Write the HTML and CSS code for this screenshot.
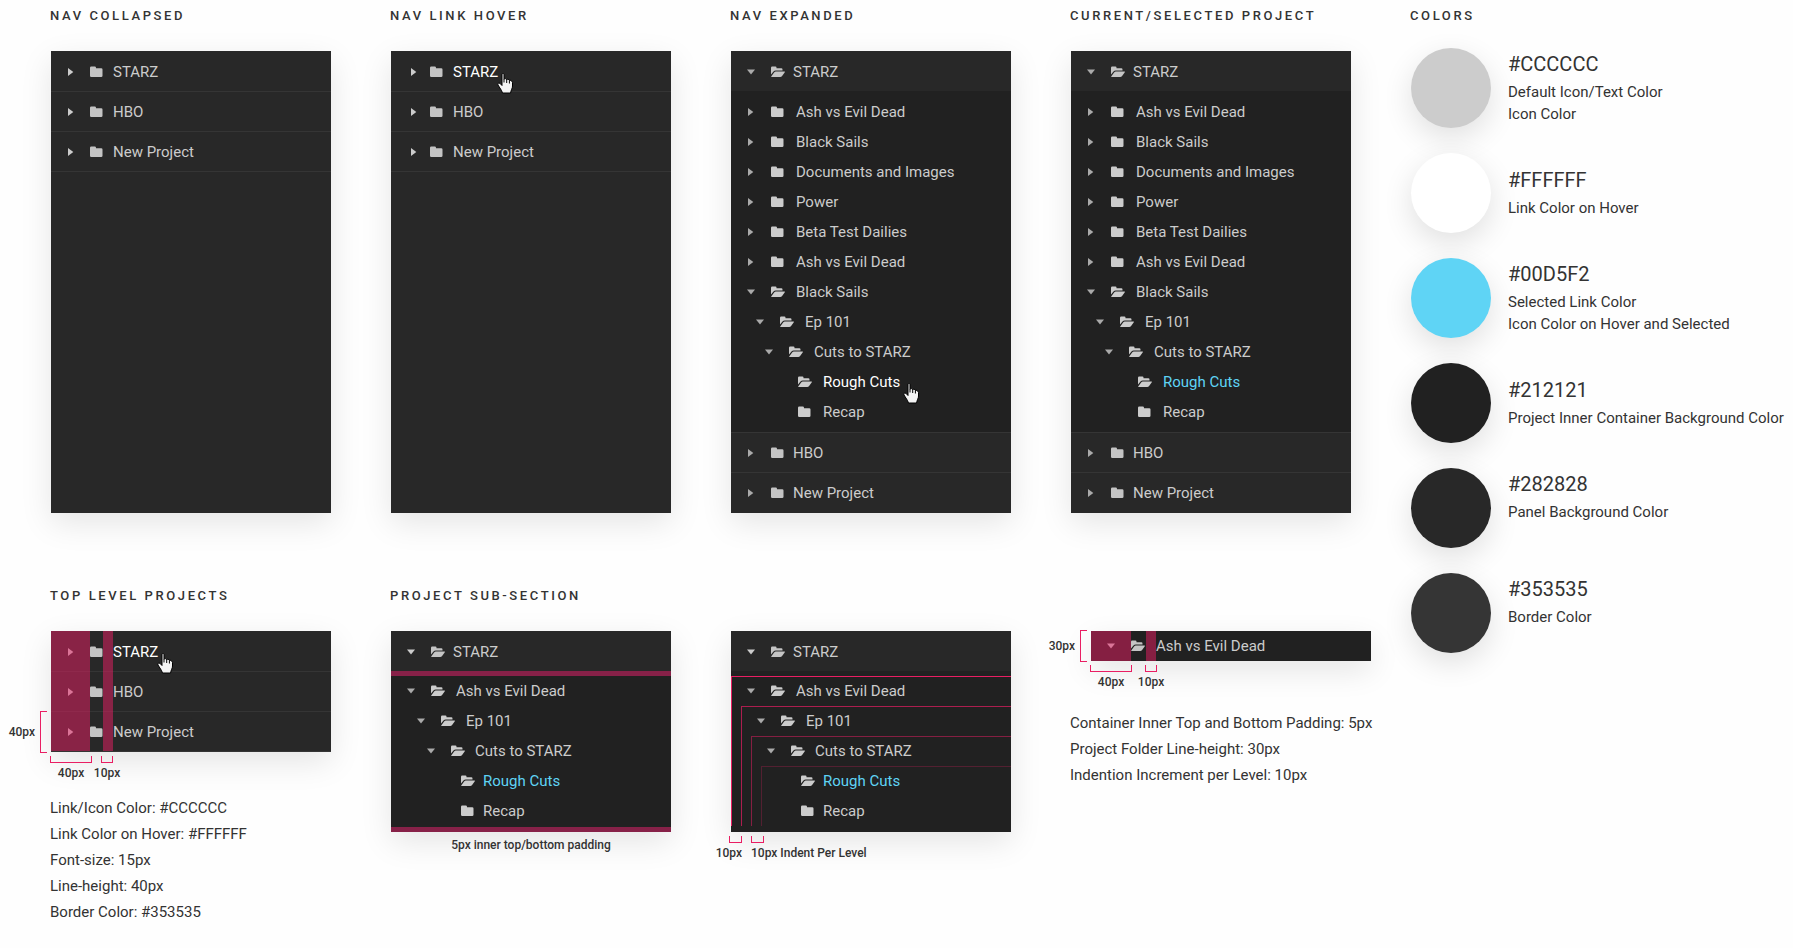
FILE: index.html
```html
<!DOCTYPE html>
<html lang="en">

<head>
  <meta charset="UTF-8">
  <meta name="viewport" content="width=device-width, initial-scale=1.0">
  <title>Project Navigation Styles</title>
  <link rel="stylesheet" href="styles.css">
</head>

<body>
  <!-- shared icons -->
  <svg class="sprite" aria-hidden="true">
    <symbol id="right" viewBox="0 0 8 8"><path d="M1 0v8l5.300-4z" /></symbol>
    <symbol id="down" viewBox="0 0 8 8"><path d="M0 1.500h8L4 6.500z" /></symbol>
    <symbol id="folder" viewBox="0 0 14 12">
      <path d="M1.300.5h3.400Q6 .5 6 1.800V2.200h5.200Q12.500 2.200 12.500 3.500v6.200Q12.500 11 11.200 11H1.300Q0 11 0 9.700V1.800Q0 .5 1.300.5z" />
    </symbol>
    <symbol id="open" viewBox="0 0 14 12">
      <path d="M1.200.5h3.200Q5.500.5 5.500 1.600V2.300h4.800Q11.500 2.300 11.500 3.500V4.600H4.800Q3.400 4.600 2.500 5.600L0 8.600V1.700Q0 .5 1.200.5z" />
      <path d="M4.900 5.500h8.500q.9 0 .4.800L11.100 10.100Q10.400 11 9.200 11H.8Q-.2 11 .4 10.200L3.100 6.500Q3.900 5.500 4.900 5.500z" />
    </symbol>
    <symbol id="hand" viewBox="0 0 17 21">
      <path d="M5 1.500Q5 .5 6 .5t1 1v5Q7.200 5.500 8.300 5.600T9.700 6.800Q10 6 11 6.200T12.400 7.500Q13 7 14 7.500T15.500 9.500V13Q15.500 15 14.500 16.500L13.500 20H5.500L4.500 17.500 1 12Q.3 10.500 1.300 10.200T3.500 10.800L5 12.500z" fill="#f4f4f4" stroke="#000" />
      <path d="M7 6.500V9.500M9.700 7v3M12.400 7.500V10.500" fill="none" stroke="#000" />
    </symbol>
  </svg>

  <main class="board">
    <div class="specs">
      <section>
        <h2>Nav Collapsed</h2>
        <nav class="panel panel-tall">
          <ul class="closed">
            <li><div class="row"><button aria-label="Expand STARZ"><svg><use href="#right" /></svg></button><svg class="icon"><use href="#folder" /></svg><a href="#">STARZ</a></div></li>
            <li><div class="row"><button aria-label="Expand HBO"><svg><use href="#right" /></svg></button><svg class="icon"><use href="#folder" /></svg><a href="#">HBO</a></div></li>
            <li><div class="row"><button aria-label="Expand New Project"><svg><use href="#right" /></svg></button><svg class="icon"><use href="#folder" /></svg><a href="#">New Project</a></div></li>
          </ul>
        </nav>
      </section>

      <section>
        <h2>Nav Link Hover</h2>
        <nav class="panel panel-tall">
          <ul class="closed toggle-near">
            <li><div class="row"><button aria-label="Expand STARZ"><svg><use href="#right" /></svg></button><svg class="icon"><use href="#folder" /></svg><a class="hover" href="#">STARZ<svg class="cursor"><use href="#hand" /></svg></a></div></li>
            <li><div class="row"><button aria-label="Expand HBO"><svg><use href="#right" /></svg></button><svg class="icon"><use href="#folder" /></svg><a href="#">HBO</a></div></li>
            <li><div class="row"><button aria-label="Expand New Project"><svg><use href="#right" /></svg></button><svg class="icon"><use href="#folder" /></svg><a href="#">New Project</a></div></li>
          </ul>
        </nav>
      </section>

      <section>
        <h2>Nav Expanded</h2>
        <nav class="panel panel-tall">
          <ul class="dim-toggles">
            <li>
              <div class="row"><button aria-label="Collapse STARZ"><svg><use href="#down" /></svg></button><svg class="icon"><use href="#open" /></svg><a href="#">STARZ</a></div>
              <div class="inner">
                <ul>
                  <li><div class="row"><button aria-label="Expand"><svg><use href="#right" /></svg></button><svg class="icon"><use href="#folder" /></svg><a href="#">Ash vs Evil Dead</a></div></li>
                  <li><div class="row"><button aria-label="Expand"><svg><use href="#right" /></svg></button><svg class="icon"><use href="#folder" /></svg><a href="#">Black Sails</a></div></li>
                  <li><div class="row"><button aria-label="Expand"><svg><use href="#right" /></svg></button><svg class="icon"><use href="#folder" /></svg><a href="#">Documents and Images</a></div></li>
                  <li><div class="row"><button aria-label="Expand"><svg><use href="#right" /></svg></button><svg class="icon"><use href="#folder" /></svg><a href="#">Power</a></div></li>
                  <li><div class="row"><button aria-label="Expand"><svg><use href="#right" /></svg></button><svg class="icon"><use href="#folder" /></svg><a href="#">Beta Test Dailies</a></div></li>
                  <li><div class="row"><button aria-label="Expand"><svg><use href="#right" /></svg></button><svg class="icon"><use href="#folder" /></svg><a href="#">Ash vs Evil Dead</a></div></li>
                  <li>
                    <div class="row"><button aria-label="Collapse"><svg><use href="#down" /></svg></button><svg class="icon"><use href="#open" /></svg><a href="#">Black Sails</a></div>
                    <ul class="level-2">
                      <li>
                        <div class="row"><button aria-label="Collapse"><svg><use href="#down" /></svg></button><svg class="icon"><use href="#open" /></svg><a href="#">Ep 101</a></div>
                        <ul class="level-3">
                          <li>
                            <div class="row"><button aria-label="Collapse"><svg><use href="#down" /></svg></button><svg class="icon"><use href="#open" /></svg><a href="#">Cuts to STARZ</a></div>
                            <ul class="level-4">
                              <li><div class="row leaf"><svg class="icon"><use href="#open" /></svg><a class="hover" href="#">Rough Cuts<svg class="cursor cursor-away"><use href="#hand" /></svg></a></div></li>
                              <li><div class="row leaf"><svg class="icon"><use href="#folder" /></svg><a href="#">Recap</a></div></li>
                            </ul>
                          </li>
                        </ul>
                      </li>
                    </ul>
                  </li>
                </ul>
              </div>
            </li>
            <li><div class="row"><button aria-label="Expand HBO"><svg><use href="#right" /></svg></button><svg class="icon"><use href="#folder" /></svg><a href="#">HBO</a></div></li>
            <li><div class="row"><button aria-label="Expand New Project"><svg><use href="#right" /></svg></button><svg class="icon"><use href="#folder" /></svg><a href="#">New Project</a></div></li>
          </ul>
        </nav>
      </section>

      <section>
        <h2>Current/Selected Project</h2>
        <nav class="panel panel-tall">
          <ul class="dim-toggles">
            <li>
              <div class="row"><button aria-label="Collapse STARZ"><svg><use href="#down" /></svg></button><svg class="icon"><use href="#open" /></svg><a href="#">STARZ</a></div>
              <div class="inner">
                <ul>
                  <li><div class="row"><button aria-label="Expand"><svg><use href="#right" /></svg></button><svg class="icon"><use href="#folder" /></svg><a href="#">Ash vs Evil Dead</a></div></li>
                  <li><div class="row"><button aria-label="Expand"><svg><use href="#right" /></svg></button><svg class="icon"><use href="#folder" /></svg><a href="#">Black Sails</a></div></li>
                  <li><div class="row"><button aria-label="Expand"><svg><use href="#right" /></svg></button><svg class="icon"><use href="#folder" /></svg><a href="#">Documents and Images</a></div></li>
                  <li><div class="row"><button aria-label="Expand"><svg><use href="#right" /></svg></button><svg class="icon"><use href="#folder" /></svg><a href="#">Power</a></div></li>
                  <li><div class="row"><button aria-label="Expand"><svg><use href="#right" /></svg></button><svg class="icon"><use href="#folder" /></svg><a href="#">Beta Test Dailies</a></div></li>
                  <li><div class="row"><button aria-label="Expand"><svg><use href="#right" /></svg></button><svg class="icon"><use href="#folder" /></svg><a href="#">Ash vs Evil Dead</a></div></li>
                  <li>
                    <div class="row"><button aria-label="Collapse"><svg><use href="#down" /></svg></button><svg class="icon"><use href="#open" /></svg><a href="#">Black Sails</a></div>
                    <ul class="level-2">
                      <li>
                        <div class="row"><button aria-label="Collapse"><svg><use href="#down" /></svg></button><svg class="icon"><use href="#open" /></svg><a href="#">Ep 101</a></div>
                        <ul class="level-3">
                          <li>
                            <div class="row"><button aria-label="Collapse"><svg><use href="#down" /></svg></button><svg class="icon"><use href="#open" /></svg><a href="#">Cuts to STARZ</a></div>
                            <ul class="level-4">
                              <li><div class="row leaf"><svg class="icon"><use href="#open" /></svg><a class="selected" href="#">Rough Cuts</a></div></li>
                              <li><div class="row leaf"><svg class="icon"><use href="#folder" /></svg><a href="#">Recap</a></div></li>
                            </ul>
                          </li>
                        </ul>
                      </li>
                    </ul>
                  </li>
                </ul>
              </div>
            </li>
            <li><div class="row"><button aria-label="Expand HBO"><svg><use href="#right" /></svg></button><svg class="icon"><use href="#folder" /></svg><a href="#">HBO</a></div></li>
            <li><div class="row"><button aria-label="Expand New Project"><svg><use href="#right" /></svg></button><svg class="icon"><use href="#folder" /></svg><a href="#">New Project</a></div></li>
          </ul>
        </nav>
      </section>

      <section>
        <h2>Top Level Projects</h2>
        <nav class="panel">
          <ul class="closed">
            <li><div class="row"><button aria-label="Expand STARZ"><svg><use href="#right" /></svg></button><svg class="icon"><use href="#folder" /></svg><a class="hover" href="#">STARZ<svg class="cursor"><use href="#hand" /></svg></a></div></li>
            <li><div class="row"><button aria-label="Expand HBO"><svg><use href="#right" /></svg></button><svg class="icon"><use href="#folder" /></svg><a href="#">HBO</a></div></li>
            <li><div class="row"><button aria-label="Expand New Project"><svg><use href="#right" /></svg></button><svg class="icon"><use href="#folder" /></svg><a href="#">New Project</a></div></li>
          </ul>
          <div class="strips"><span class="strip-indent"></span><span class="strip-gap"></span></div>
          <div class="side-ruler"><span>40px</span></div>
        </nav>
        <div class="rulers">
          <span class="ruler">40px</span>
          <span class="ruler ruler-small">10px</span>
        </div>
        <ul class="notes">
          <li>Link/Icon Color: #CCCCCC</li>
          <li>Link Color on Hover: #FFFFFF</li>
          <li>Font-size: 15px</li>
          <li>Line-height: 40px</li>
          <li>Border Color: #353535</li>
        </ul>
      </section>

      <section>
        <h2>Project Sub-Section</h2>
        <nav class="panel">
          <ul class="wide-indent">
            <li>
              <div class="row"><button aria-label="Collapse STARZ"><svg><use href="#down" /></svg></button><svg class="icon"><use href="#open" /></svg><a href="#">STARZ</a></div>
              <div class="inner inner-padded">
                <ul>
                  <li>
                    <div class="row"><button aria-label="Collapse"><svg><use href="#down" /></svg></button><svg class="icon"><use href="#open" /></svg><a href="#">Ash vs Evil Dead</a></div>
                    <ul class="level-2">
                      <li>
                        <div class="row"><button aria-label="Collapse"><svg><use href="#down" /></svg></button><svg class="icon"><use href="#open" /></svg><a href="#">Ep 101</a></div>
                        <ul class="level-3">
                          <li>
                            <div class="row"><button aria-label="Collapse"><svg><use href="#down" /></svg></button><svg class="icon"><use href="#open" /></svg><a href="#">Cuts to STARZ</a></div>
                            <ul class="level-4">
                              <li><div class="row leaf"><svg class="icon"><use href="#open" /></svg><a class="selected" href="#">Rough Cuts</a></div></li>
                              <li><div class="row leaf"><svg class="icon"><use href="#folder" /></svg><a href="#">Recap</a></div></li>
                            </ul>
                          </li>
                        </ul>
                      </li>
                    </ul>
                  </li>
                </ul>
              </div>
            </li>
          </ul>
        </nav>
        <p class="caption">5px inner top/bottom padding</p>
      </section>

      <section class="untitled">
        <nav class="panel">
          <ul class="wide-indent">
            <li>
              <div class="row"><button aria-label="Collapse STARZ"><svg><use href="#down" /></svg></button><svg class="icon"><use href="#open" /></svg><a href="#">STARZ</a></div>
              <div class="inner guides">
                <ul>
                  <li>
                    <div class="row"><button aria-label="Collapse"><svg><use href="#down" /></svg></button><svg class="icon"><use href="#open" /></svg><a href="#">Ash vs Evil Dead</a></div>
                    <ul class="level-2">
                      <li>
                        <div class="row"><button aria-label="Collapse"><svg><use href="#down" /></svg></button><svg class="icon"><use href="#open" /></svg><a href="#">Ep 101</a></div>
                        <ul class="level-3">
                          <li>
                            <div class="row"><button aria-label="Collapse"><svg><use href="#down" /></svg></button><svg class="icon"><use href="#open" /></svg><a href="#">Cuts to STARZ</a></div>
                            <ul class="level-4">
                              <li><div class="row leaf"><svg class="icon"><use href="#open" /></svg><a class="selected" href="#">Rough Cuts</a></div></li>
                              <li><div class="row leaf"><svg class="icon"><use href="#folder" /></svg><a href="#">Recap</a></div></li>
                            </ul>
                          </li>
                        </ul>
                      </li>
                    </ul>
                  </li>
                </ul>
              </div>
            </li>
          </ul>
        </nav>
        <div class="rulers rulers-level">
          <span class="ruler ruler-small ruler-end">10px</span>
          <span class="ruler ruler-small ruler-start">10px Indent Per Level</span>
        </div>
      </section>

      <section class="untitled">
        <div class="single">
          <nav class="panel">
            <div class="inner-row">
              <div class="row"><button aria-label="Collapse"><svg><use href="#down" /></svg></button><svg class="icon"><use href="#open" /></svg><a href="#">Ash vs Evil Dead</a></div>
            </div>
            <div class="strips strips-inner"><span class="strip-indent"></span><span class="strip-gap"></span></div>
            <div class="side-ruler side-ruler-inner"><span>30px</span></div>
          </nav>
          <div class="rulers rulers-inner">
            <span class="ruler">40px</span>
            <span class="ruler ruler-small">10px</span>
          </div>
        </div>
        <ul class="notes notes-inner">
          <li>Container Inner Top and Bottom Padding: 5px</li>
          <li>Project Folder Line-height: 30px</li>
          <li>Indention Increment per Level: 10px</li>
        </ul>
      </section>
    </div>

    <section class="colors">
      <h2>Colors</h2>
      <ul class="swatches">
        <li>
          <span class="swatch default"></span>
          <div>
            <h3>#CCCCCC</h3>
            <p>Default Icon/Text Color</p>
            <p>Icon Color</p>
          </div>
        </li>
        <li class="middle">
          <span class="swatch white"></span>
          <div>
            <h3>#FFFFFF</h3>
            <p>Link Color on Hover</p>
          </div>
        </li>
        <li>
          <span class="swatch blue"></span>
          <div>
            <h3>#00D5F2</h3>
            <p>Selected Link Color</p>
            <p>Icon Color on Hover and Selected</p>
          </div>
        </li>
        <li class="middle">
          <span class="swatch inner-bg"></span>
          <div>
            <h3>#212121</h3>
            <p>Project Inner Container Background Color</p>
          </div>
        </li>
        <li>
          <span class="swatch panel-bg"></span>
          <div>
            <h3>#282828</h3>
            <p>Panel Background Color</p>
          </div>
        </li>
        <li>
          <span class="swatch border-color"></span>
          <div>
            <h3>#353535</h3>
            <p>Border Color</p>
          </div>
        </li>
      </ul>
    </section>
  </main>
</body>

</html>
```
FILE: styles.css
```css
* {
  box-sizing: border-box;
}

body {
  background: #fefefe;
  color: #333;
  font-family: Roboto, "Liberation Sans", sans-serif;
  font-size: 15px;
  margin: 0;
}

ul {
  list-style: none;
  margin: 0;
  padding: 0;
}

h2 {
  font-size: 13px;
  font-weight: 500;
  letter-spacing: .2em;
  line-height: 20px;
  margin: 0 0 25px -1px;
  text-transform: uppercase;
  white-space: nowrap;
}

.sprite {
  display: none;
}

.board {
  display: flex;
  gap: 60px;
  padding: 6px 0 0 51px;
}

.specs {
  column-gap: 60px;
  display: grid;
  flex: 1;
  grid-template-columns: repeat(4, minmax(0, 1fr));
  row-gap: 73px;
}

.untitled {
  padding-top: 45px;
}

/* navigation panels */
.panel {
  background: #282828;
  box-shadow: 0 10px 30px rgba(0, 0, 0, .1);
  position: relative;
}

.panel-tall {
  min-height: 462px;
}

.panel > ul > li + li {
  border-top: 1px solid #353535;
}

.closed {
  border-bottom: 1px solid #353535;
}

.row {
  align-items: center;
  display: flex;
  height: 40px;
  padding: 1px 0 0 16px;
}

li + li > .row {
  height: 39px;
  padding-top: 0;
}

.row button {
  background: none;
  border: 0;
  color: #ccc;
  cursor: pointer;
  height: 8px;
  margin: 0 16px 0 0;
  padding: 0;
  width: 8px;
}

.row button svg {
  display: block;
  fill: currentColor;
  height: 8px;
  width: 8px;
}

.closed button {
  margin-right: 15px;
}

.toggle-near .row {
  padding-left: 19px;
}

.toggle-near button {
  margin-right: 12px;
}

.dim-toggles button,
.inner button {
  color: #aaa;
}

.icon {
  fill: #c4c4c4;
  flex: none;
  height: 12px;
  margin-right: 8px;
  width: 14px;
}

.closed .icon {
  margin-right: 9px;
}

.row a {
  color: #ccc;
  position: relative;
  text-decoration: none;
  white-space: nowrap;
}

.row a:hover,
.row a.hover {
  color: #fff;
}

.row a.selected {
  color: #5fd4f5;
}

.cursor {
  height: 21px;
  left: calc(100% - 1px);
  position: absolute;
  top: 10px;
  width: 17px;
}

.cursor-away {
  margin-left: 4px;
}

.inner {
  background: #212121;
  padding: 6px 0 5px;
}

.inner .row,
.inner-row .row {
  height: 30px;
  padding-top: 0;
}

.inner .icon,
.inner-row .icon {
  margin-right: 11px;
}

.inner .icon {
  fill: #ccc;
}

.inner ul ul {
  margin-left: 9px;
}

.inner .leaf {
  padding-left: 40px;
}

/* 10px steps, the names stay a little closer to the icons */
.wide-indent .inner ul ul {
  margin-left: 10px;
}

.wide-indent .inner .level-3 .icon {
  margin-right: 10px;
}

.wide-indent .inner .level-4 .icon {
  margin-right: 8px;
}

.inner-padded {
  border-bottom: 5px solid #872148;
  border-top: 5px solid #872148;
  padding: 0 0 1px;
}

.inner-row {
  background: #212121;
}

/* indent guides */
.guides {
  padding: 5px 0 6px;
}

.guides ul {
  position: relative;
}

.guides ul::before {
  border-left: 1px solid #e91e63;
  border-top: 1px solid #e91e63;
  content: "";
  inset: 0;
  pointer-events: none;
  position: absolute;
}

.guides .level-2::before {
  opacity: .7;
}

.guides .level-3::before {
  opacity: .5;
}

.guides .level-4::before {
  opacity: .25;
}

/* measurements */
.strips {
  bottom: 1px;
  display: flex;
  gap: 13px;
  left: 0;
  pointer-events: none;
  position: absolute;
  top: 0;
}

.strips span {
  background: rgba(233, 30, 99, .5);
}

.strip-indent {
  width: 39px;
}

.strip-gap {
  width: 10px;
}

.strips-inner {
  bottom: 0;
  gap: 15px;
}

.strips-inner .strip-indent {
  width: 40px;
}

.side-ruler {
  align-items: center;
  bottom: 0;
  display: flex;
  font-size: 12px;
  font-weight: 500;
  gap: 5px;
  height: 40px;
  position: absolute;
  right: calc(100% + 4px);
}

.side-ruler::after {
  border: 1px solid #e91e63;
  border-right: 0;
  content: "";
  height: 100%;
  width: 6px;
}

.side-ruler-inner {
  height: 30px;
}

.rulers {
  display: flex;
  font-size: 12px;
  font-weight: 500;
  gap: 11px;
  line-height: 16px;
  padding-top: 4px;
  position: relative;
}

.ruler {
  align-items: center;
  display: flex;
  flex-direction: column;
  gap: 2px;
  white-space: nowrap;
  width: 40px;
}

.ruler::before {
  border: 1px solid #e91e63;
  border-top: 0;
  content: "";
  height: 6px;
  width: 100%;
}

.ruler-small {
  width: 10px;
}

.rulers-inner {
  gap: 15px;
}

.rulers-level {
  gap: 9px;
}

.rulers-level .ruler {
  width: 11px;
}

.ruler-start {
  align-items: flex-start;
}

.ruler-end {
  align-items: flex-end;
}

.single {
  margin: 0 -20px 0 20px;
}

.caption {
  font-size: 12px;
  font-weight: 500;
  line-height: 16px;
  margin: 5px 0 0;
  position: relative;
  text-align: center;
}

.notes {
  line-height: 26px;
  margin: 14px 0 0 -1px;
  position: relative;
  white-space: nowrap;
}

.notes-inner {
  margin-top: 20px;
}

/* colors */
.colors {
  width: 382px;
}

.colors h2 {
  margin-bottom: 22px;
}

.swatches {
  display: flex;
  flex-direction: column;
  gap: 25px;
}

.swatches li {
  display: flex;
  gap: 17px;
  height: 80px;
  white-space: nowrap;
}

.swatches .middle {
  align-items: center;
}

.middle div {
  padding-bottom: 4px;
}

.swatch {
  border-radius: 50%;
  box-shadow: 0 10px 30px rgba(0, 0, 0, .12);
  flex: none;
  height: 80px;
  width: 80px;
}

.default {
  background: #ccc;
}

.white {
  background: #fff;
}

.blue {
  background: #5fd4f5;
}

.inner-bg {
  background: #212121;
}

.panel-bg {
  background: #282828;
}

.border-color {
  background: #353535;
}

.swatches h3 {
  font-size: 20px;
  font-weight: 400;
  line-height: 32px;
  margin: 0 0 1px;
}

.swatches p {
  line-height: 22px;
  margin: 0;
}
```
